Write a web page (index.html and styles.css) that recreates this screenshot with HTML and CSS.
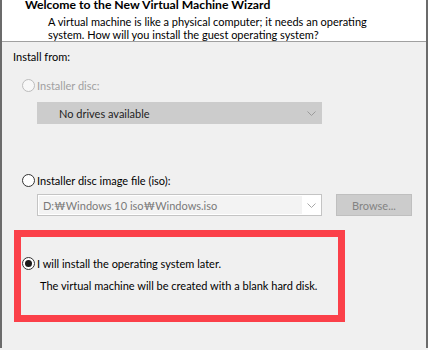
FILE: index.html
```html
<!DOCTYPE html>
<html lang="en">
<head>
  <meta charset="UTF-8">
  <meta name="viewport" content="width=device-width, initial-scale=1.0">
  <title>New Virtual Machine Wizard</title>
  <link rel="stylesheet" href="styles.css">
</head>
<body>
  <div class="window">
    <div class="header">
      <div class="title">Welcome to the New Virtual Machine Wizard</div>
      <div class="subtitle">A virtual machine is like a physical computer; it needs an operating<br>system. How will you install the guest operating system?</div>
    </div>

    <div class="panel">
      <div class="label">Install from:</div>

      <div class="radio-row disabled first">
        <span class="radio"></span>
        <span>Installer disc:</span>
      </div>
      <div class="dropdown">
        <span>No drives available</span>
        <svg class="chevron" width="9" height="5" viewBox="0 0 9 5"><polyline points="0.5,0.5 4.5,4.5 8.5,0.5" fill="none" stroke="#9a9a9a" stroke-width="1"/></svg>
      </div>

      <div class="radio-row second">
        <span class="radio"></span>
        <span>Installer disc image file (iso):</span>
      </div>
      <div class="iso-row">
        <div class="combo">
          <div class="combo-text">D:₩Windows 10 iso₩Windows.iso</div>
          <div class="combo-arrow">
            <svg width="9" height="5" viewBox="0 0 9 5"><polyline points="0.5,0.5 4.5,4.5 8.5,0.5" fill="none" stroke="#a8a8a8" stroke-width="1"/></svg>
          </div>
        </div>
        <div class="browse">Browse...</div>
      </div>

      <div class="highlight">
        <div class="radio-row">
          <span class="radio checked"></span>
          <span>I will install the operating system later.</span>
        </div>
        <div class="note">The virtual machine will be created with a blank hard disk.</div>
      </div>
    </div>
  </div>
</body>
</html>
```

FILE: styles.css
```css
* {
  margin: 0;
  padding: 0;
  box-sizing: border-box;
}

body {
  font-family: Lato, 'Noto Sans CJK KR', sans-serif;
  font-size: 11px;
  line-height: 13px;
  color: #000;
  background: #f0f0f0;
  overflow: hidden;
}

.window {
  width: 428px;
  height: 350px;
  border-left: 2px solid #6b6b6b;
  border-right: 2px solid #6b6b6b;
  background: #f0f0f0;
}

.header {
  background: #fff;
  height: 44px;
  border-bottom: 1px solid #a0a0a0;
  padding-bottom: 2px;
}

.title {
  font-weight: bold;
  font-size: 12.2px;
  padding-left: 23px;
  margin-top: -2px;
  white-space: nowrap;
}

.subtitle {
  padding-left: 46px;
  margin-top: 4px;
  white-space: nowrap;
}

.panel {
  padding-top: 8px;
}

.label {
  padding-left: 11px;
}

.radio-row {
  display: flex;
  align-items: center;
  padding-left: 20px;
  height: 13px;
}

.radio-row.first {
  margin-top: 16px;
}

.radio-row.second {
  margin-top: 50px;
}

.radio {
  width: 13px;
  height: 13px;
  border: 1px solid #333;
  border-radius: 50%;
  background: #fff;
  margin-right: 2px;
  display: flex;
  align-items: center;
  justify-content: center;
  flex-shrink: 0;
}

.radio.checked::after {
  content: '';
  width: 7px;
  height: 7px;
  border-radius: 50%;
  background: #1a1a1a;
}

.disabled {
  color: #a0a0a0;
}

.disabled .radio {
  border-color: #bcbcbc;
  background: #f7f7f7;
}

.dropdown {
  margin: 10px 0 0 35px;
  width: 285px;
  height: 22px;
  background: #cccccc;
  display: flex;
  align-items: center;
  justify-content: space-between;
  padding: 0 6px 0 22px;
  color: #1e1e1e;
}

.iso-row {
  display: flex;
  margin: 7px 0 0 35px;
  gap: 14px;
}

.combo {
  width: 285px;
  height: 22px;
  border: 1px solid #c4c4c4;
  background: #fff;
  display: flex;
}

.combo-text {
  flex: 1;
  background: #f3f3f3;
  margin: 1px 0 1px 1px;
  padding-left: 4px;
  display: flex;
  align-items: center;
  color: #7a7a7a;
}

.combo-arrow {
  width: 19px;
  display: flex;
  align-items: center;
  justify-content: center;
}

.browse {
  width: 76px;
  height: 22px;
  background: #cccccc;
  border: 1px solid #bfbfbf;
  color: #838383;
  display: flex;
  align-items: center;
  justify-content: center;
}

.highlight {
  margin: 14px 0 0 12px;
  width: 331px;
  height: 92px;
  border: 7px solid #fb4049;
  padding-top: 20px;
}

.highlight .radio-row {
  padding-left: 1px;
}

.note {
  margin-top: 9px;
  padding-left: 19px;
  white-space: nowrap;
}
```
